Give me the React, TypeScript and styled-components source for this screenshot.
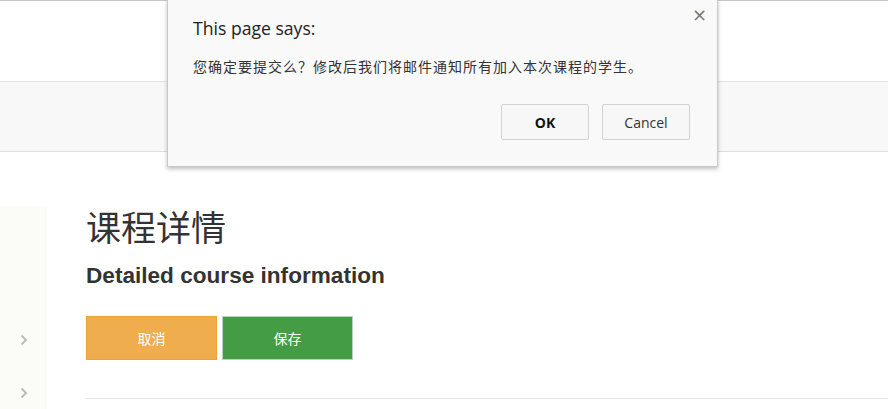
import styled, { createGlobalStyle } from "styled-components";

const Global = createGlobalStyle`
  html, body {
    margin: 0;
    padding: 0;
    background: #ffffff;
    overflow: hidden;
  }
  body {
    font-family: "Liberation Sans", Arial, "Noto Sans CJK SC", sans-serif;
    color: #333333;
  }
`

const Page = styled.div`
  position: relative;
  width: 888px;
  height: 409px;
  overflow: hidden;
`

const TopBar = styled.div`
  height: 82px;
  border-top: 1px solid #c6c6c6;
  border-bottom: 1px solid #e3e3e3;
  box-sizing: border-box;
  background: #ffffff;
`

const NavBand = styled.div`
  height: 70px;
  background: #f8f8f8;
  border-bottom: 1px solid #dddddd;
  box-sizing: border-box;
`

const Body = styled.div`
  display: flex;
  padding-top: 54px;
`

const Sidebar = styled.div`
  width: 47px;
  height: 210px;
  background: #fbfbf7;
  display: flex;
  flex-direction: column;
  align-items: center;
  padding-top: 128px;
  gap: 41px;
  box-sizing: border-box;
  color: #bbbbbb;
`

const Main = styled.div`
  flex: 1;
  margin-left: 39px;
`

const Title = styled.h1`
  margin: 0;
  font-family: "Noto Sans CJK SC", sans-serif;
  font-weight: 400;
  font-size: 35px;
  line-height: 40px;
  color: #333333;
`

const Subtitle = styled.h3`
  margin: 17px 0 0;
  font-family: "Liberation Sans", Arial, sans-serif;
  font-weight: 700;
  font-size: 22.6px;
  line-height: 26px;
  color: #333333;
`

const Actions = styled.div`
  display: flex;
  gap: 5px;
  margin-top: 27px;
`

const ActionButton = styled.button<{ $tone: "warn" | "ok" }>`
  width: 131px;
  height: 44px;
  border: 1px solid ${(p) => (p.$tone === "warn" ? "#eea236" : "#b7d3c0")};
  background: ${(p) => (p.$tone === "warn" ? "#f0ad4e" : "#449d44")};
  color: #ffffff;
  font-family: "Noto Sans CJK SC", sans-serif;
  font-size: 14px;
  padding: 0;
  cursor: pointer;
`

const Divider = styled.hr`
  margin: 38px 0 0;
  border: 0;
  border-top: 1px solid #e8e8e8;
`

const Dialog = styled.div`
  position: absolute;
  left: 167px;
  top: -1px;
  width: 551px;
  height: 168px;
  background: #f9f9f9;
  border: 1px solid #c9c9c9;
  box-sizing: border-box;
  box-shadow: 0 2px 4px rgba(0, 0, 0, 0.25);
  padding: 16px 27px 0 25px;
`

const Close = styled.span`
  position: absolute;
  right: 10px;
  top: 4px;
  font-family: "DejaVu Sans", sans-serif;
  font-size: 18px;
  color: #777777;
`

const DialogTitle = styled.div`
  font-family: "Open Sans", "Noto Sans", sans-serif;
  font-size: 17.6px;
  line-height: 24px;
  color: #222222;
`

const DialogText = styled.div`
  margin-top: 17px;
  font-family: "Noto Sans CJK SC", sans-serif;
  font-size: 14px;
  letter-spacing: 1px;
  line-height: 18px;
  color: #333333;
  white-space: nowrap;
`

const DialogButtons = styled.div`
  display: flex;
  justify-content: flex-end;
  gap: 13px;
  margin-top: 29px;
`

const DialogButton = styled.button<{ $primary?: boolean }>`
  width: 88px;
  height: 36px;
  background: #f7f7f7;
  border: 1px solid #d3d3d3;
  border-radius: 2px;
  font-family: "Open Sans", "Noto Sans", sans-serif;
  font-size: 14px;
  font-weight: ${(p) => (p.$primary ? 700 : 400)};
  color: ${(p) => (p.$primary ? "#111111" : "#333333")};
  padding: 0;
`

function Chevron() {
  return (
    <svg width="8" height="12" viewBox="0 0 8 12">
      <path d="M1.5 1.5 L6 6 L1.5 10.5" fill="none" stroke="#bbbbbb" strokeWidth="2" />
    </svg>
  )
}

export default function App() {
  return (
    <Page>
      <Global />
      <TopBar />
      <NavBand />
      <Body>
        <Sidebar>
          <Chevron />
          <Chevron />
        </Sidebar>
        <Main>
          <Title>课程详情</Title>
          <Subtitle>Detailed course information</Subtitle>
          <Actions>
            <ActionButton $tone="warn">取消</ActionButton>
            <ActionButton $tone="ok">保存</ActionButton>
          </Actions>
          <Divider />
        </Main>
      </Body>
      <Dialog>
        <Close>×</Close>
        <DialogTitle>This page says:</DialogTitle>
        <DialogText>您确定要提交么？修改后我们将邮件通知所有加入本次课程的学生。</DialogText>
        <DialogButtons>
          <DialogButton $primary>OK</DialogButton>
          <DialogButton>Cancel</DialogButton>
        </DialogButtons>
      </Dialog>
    </Page>
  )
}
